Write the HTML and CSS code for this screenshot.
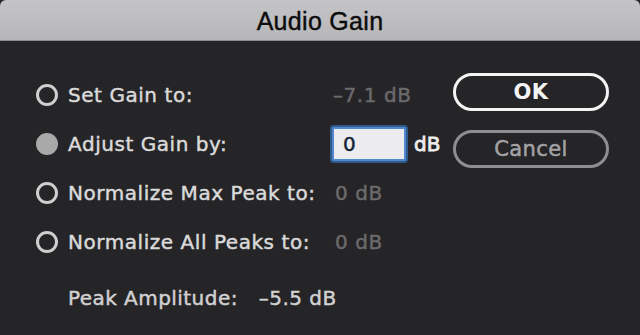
FILE: index.html
```html
<!DOCTYPE html>
<html lang="en">
<head>
    <meta charset="UTF-8">
    <title>Audio Gain</title>
    <link rel="stylesheet" href="styles.css">
</head>
<body>
    <div class="dialog">
        <div class="titlebar">Audio Gain</div>

        <div class="content">
            <div class="form">
                <div class="row">
                    <span class="radio"></span>
                    <span class="label">Set Gain to:</span>
                    <span class="value muted">&ndash;7.1 dB</span>
                </div>
                <div class="row">
                    <span class="radio checked"></span>
                    <span class="label">Adjust Gain by:</span>
                    <span class="value">
                        <span class="field">0</span>
                        <span class="unit">dB</span>
                    </span>
                </div>
                <div class="row">
                    <span class="radio"></span>
                    <span class="label">Normalize Max Peak to:</span>
                    <span class="value muted pad">0 dB</span>
                </div>
                <div class="row">
                    <span class="radio"></span>
                    <span class="label">Normalize All Peaks to:</span>
                    <span class="value muted pad">0 dB</span>
                </div>
                <div class="peak">
                    <span>Peak Amplitude:</span>
                    <span>&ndash;5.5 dB</span>
                </div>
            </div>

            <div class="actions">
                <div class="btn primary">OK</div>
                <div class="btn">Cancel</div>
            </div>
        </div>
    </div>
</body>
</html>
```

FILE: styles.css
```css
html, body {
    margin: 0;
    padding: 0;
}
body {
    width: 640px;
    height: 335px;
    overflow: hidden;
    background-color: #252427;
    font-family: 'DejaVu Sans', sans-serif;
}
.dialog {
    height: 335px;
}
.titlebar {
    height: 40px;
    line-height: 42px;
    text-align: center;
    font-family: 'Liberation Sans', Arial, sans-serif;
    font-size: 25px;
    letter-spacing: 0.3px;
    color: #0c0c0c;
    -webkit-text-stroke: 0.4px #0c0c0c;
    background: linear-gradient(#c4c3c6, #b7b6b9);
    border-bottom: 1px solid #8d8c90;
    border-radius: 6px 6px 0 0;
}
.content {
    display: flex;
    padding-left: 36px;
}
.form {
    width: 417px;
    padding-top: 29px;
}
.row {
    display: flex;
    align-items: center;
    height: 49px;
    font-size: 20px;
    letter-spacing: 0.55px;
    color: #dadada;
    -webkit-text-stroke: 0.45px currentColor;
}
.radio {
    width: 22px;
    height: 22px;
    box-sizing: border-box;
    border: 3px solid #cfcfcf;
    border-radius: 50%;
    margin-right: 10px;
}
.radio.checked {
    background-color: #a9a9a9;
    border-color: #a9a9a9;
}
.label {
    width: 265px;
}
.value {
    display: flex;
    align-items: center;
}
.value.pad {
    margin-left: 2px;
}
.muted {
    color: #6b6a6d;
}
.field {
    width: 74px;
    height: 34px;
    box-sizing: border-box;
    padding-left: 9px;
    line-height: 30px;
    background-color: #ececee;
    color: #14233a;
    border: 2px solid #5189cc;
    box-shadow: 0 0 0 2px #2f5b8f;
    border-radius: 2px;
    margin-left: -1px;
}
.unit {
    margin-left: 8px;
    color: #ededed;
    letter-spacing: 0;
    -webkit-text-stroke: 0.8px currentColor;
}
.peak {
    display: flex;
    gap: 21px;
    margin-top: 7px;
    padding-left: 32px;
    height: 49px;
    align-items: center;
    font-size: 20px;
    letter-spacing: 0.45px;
    color: #d2d2d2;
    -webkit-text-stroke: 0.45px currentColor;
}
.actions {
    display: flex;
    flex-direction: column;
    gap: 19px;
    margin-top: 32px;
}
.btn {
    width: 156px;
    height: 38px;
    box-sizing: border-box;
    border: 3px solid #8e8e90;
    border-radius: 19px;
    text-align: center;
    line-height: 32px;
    font-size: 21px;
    letter-spacing: 0.4px;
    color: #a3a3a5;
    -webkit-text-stroke: 0.5px currentColor;
}
.btn.primary {
    border-color: #f4f4f4;
    color: #f4f4f4;
    font-weight: bold;
    -webkit-text-stroke: 0;
}
```
